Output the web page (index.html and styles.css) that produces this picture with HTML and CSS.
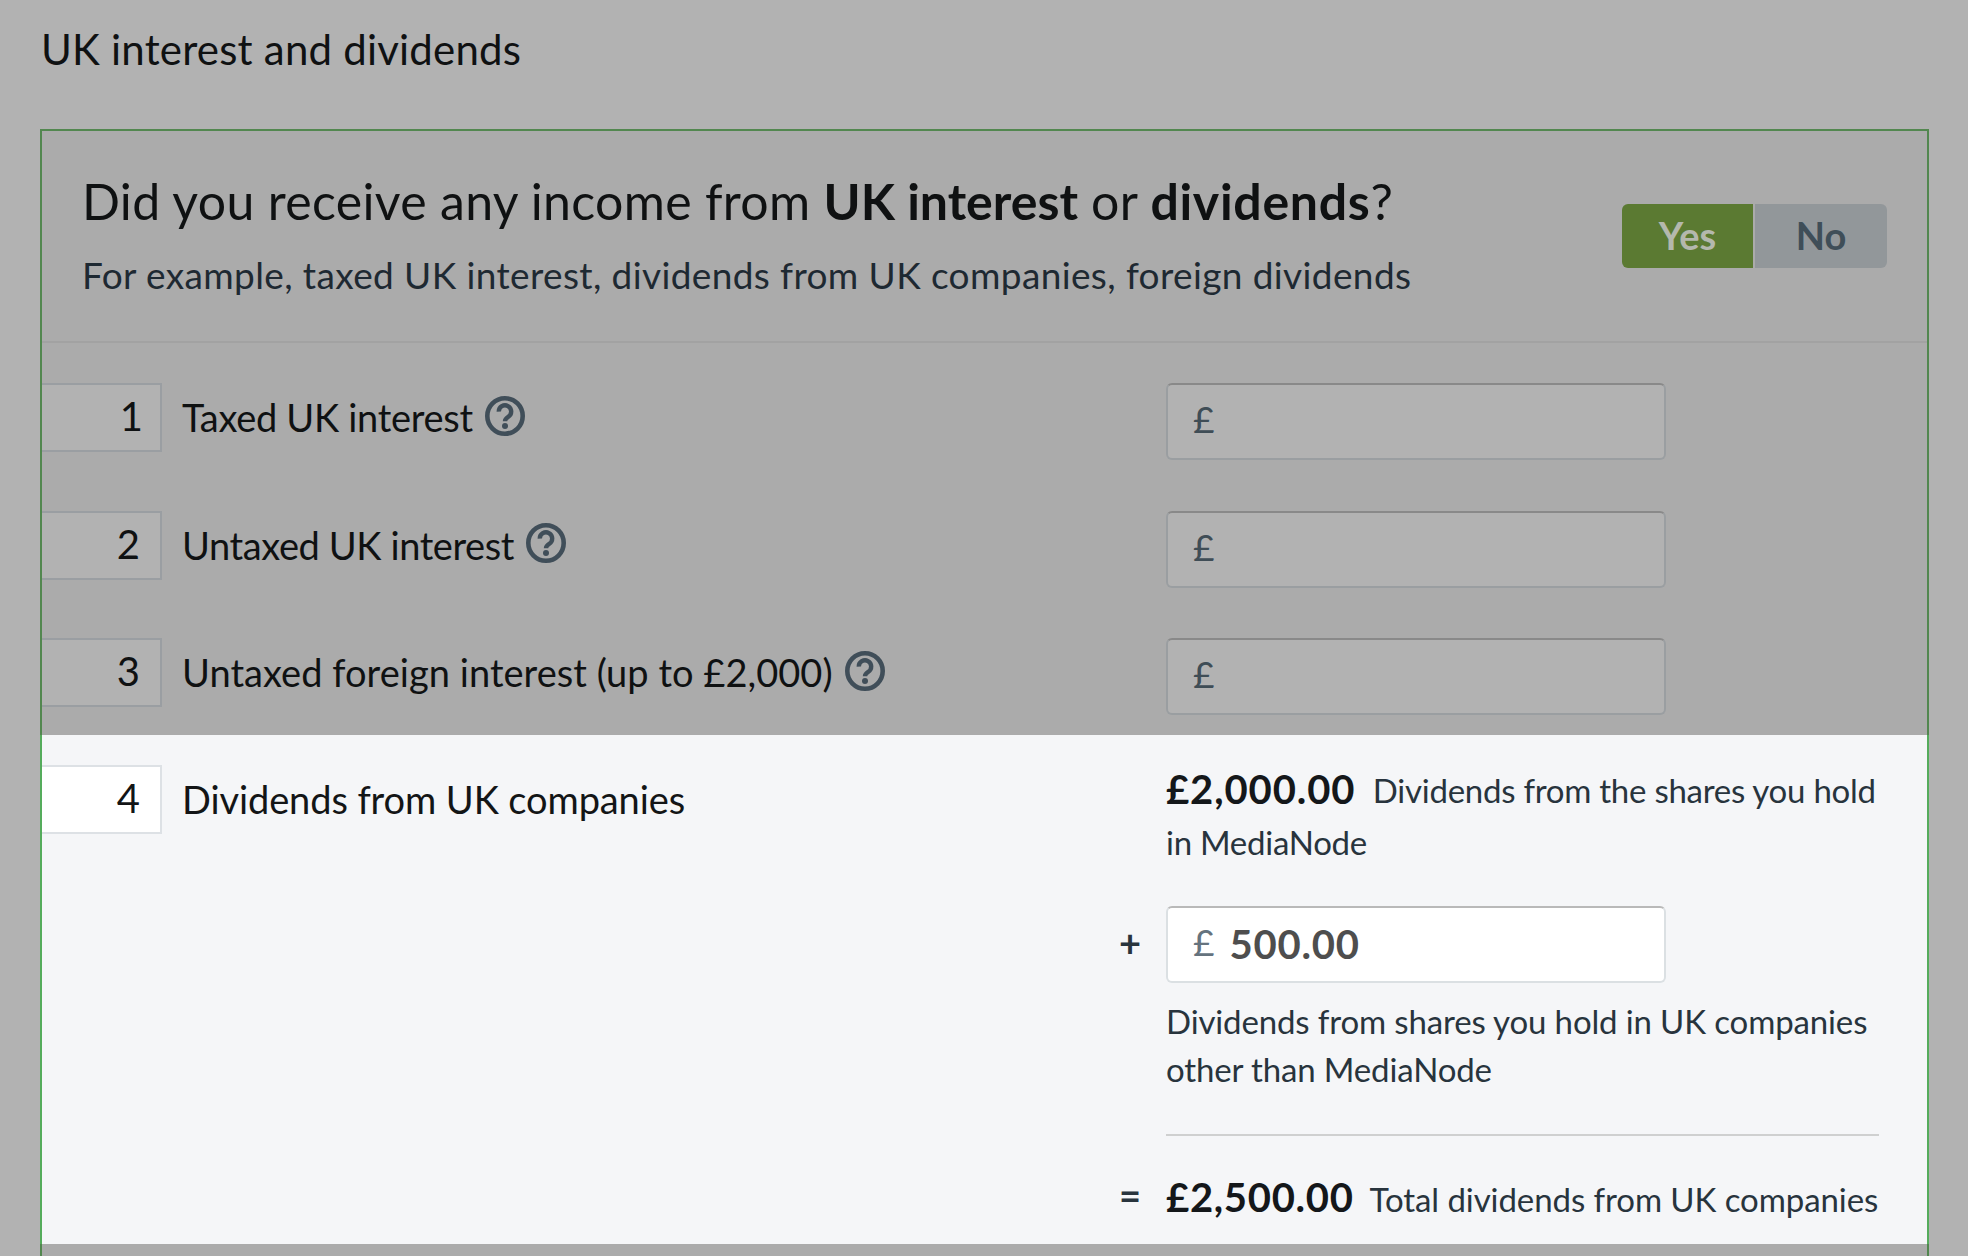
FILE: index.html
```html
<!DOCTYPE html>
<html lang="en">
<head>
<meta charset="utf-8">
<title>UK interest and dividends</title>
<link rel="stylesheet" href="styles.css">
</head>
<body>
<h1 class="page-title">UK interest and dividends</h1>
<section class="panel">
  <header class="panel-head">
    <div class="head-text">
      <h2 class="question">Did you receive any income from <b class="strong-a">UK interest</b> or <b class="strong-b">dividends</b>?</h2>
      <p class="example">For example, taxed UK interest, dividends from UK companies, foreign dividends</p>
    </div>
    <div class="toggle">
      <span class="toggle-yes">Yes</span>
      <span class="toggle-no">No</span>
    </div>
  </header>
  <div class="rows">
    <div class="row">
      <div class="num num-one">1</div>
      <div class="label label-tight">Taxed UK interest
        <svg class="help" viewBox="0 0 40 40"><circle cx="20" cy="20" r="17.7" fill="none" stroke="currentColor" stroke-width="4.6"/><path d="M13.8 15.6a6.2 6.2 0 1 1 9.4 5.2c-2.2 1.4-3.2 2.2-3.2 4.4" fill="none" stroke="currentColor" stroke-width="4.4"/><circle cx="20" cy="30" r="3" fill="currentColor"/></svg>
      </div>
      <div class="money"><span class="pound">£</span></div>
    </div>
    <div class="row">
      <div class="num">2</div>
      <div class="label label-tighter">Untaxed UK interest
        <svg class="help" viewBox="0 0 40 40"><circle cx="20" cy="20" r="17.7" fill="none" stroke="currentColor" stroke-width="4.6"/><path d="M13.8 15.6a6.2 6.2 0 1 1 9.4 5.2c-2.2 1.4-3.2 2.2-3.2 4.4" fill="none" stroke="currentColor" stroke-width="4.4"/><circle cx="20" cy="30" r="3" fill="currentColor"/></svg>
      </div>
      <div class="money"><span class="pound">£</span></div>
    </div>
    <div class="row">
      <div class="num">3</div>
      <div class="label label-wide">Untaxed foreign interest (up to £2,000)
        <svg class="help" viewBox="0 0 40 40"><circle cx="20" cy="20" r="17.7" fill="none" stroke="currentColor" stroke-width="4.6"/><path d="M13.8 15.6a6.2 6.2 0 1 1 9.4 5.2c-2.2 1.4-3.2 2.2-3.2 4.4" fill="none" stroke="currentColor" stroke-width="4.4"/><circle cx="20" cy="30" r="3" fill="currentColor"/></svg>
      </div>
      <div class="money"><span class="pound">£</span></div>
    </div>
  </div>
  <div class="active-row">
    <div class="num num-active">4</div>
    <div class="label label-active">Dividends from UK companies</div>
    <div class="calc">
      <p class="calc-line"><b class="amount">£2,000.00</b> <span class="note-inline">Dividends from the shares you hold in MediaNode</span></p>
      <div class="op-row">
        <span class="op">+</span>
        <div class="money money-active"><span class="pound">£</span><span class="money-value">500.00</span></div>
      </div>
      <p class="calc-note">Dividends from shares you hold in UK companies other than MediaNode</p>
      <hr class="calc-rule">
      <div class="total">
        <span class="op op-eq">=</span>
        <b class="amount amount-total">£2,500.00</b>
        <span class="note-total">Total dividends from UK companies</span>
      </div>
    </div>
  </div>
</section>
</body>
</html>
```
FILE: styles.css
```css
* { box-sizing: border-box; }
html, body { margin: 0; height: 100%; }
body {
  background: #b2b2b2;
  font-family: "Lato", "Open Sans", sans-serif;
  color: #0f1112;
  overflow: hidden;
  height: 1256px;
}
.page-title {
  margin: 0;
  padding: 23px 0 0 41px;
  height: 129px;
  font-size: 42px;
  line-height: 52px;
  font-weight: 400;
  letter-spacing: .2px;
}
.panel {
  margin: 0 40px;
  width: 1889px;
  height: 1140px;
  background: #ababab;
  border: solid #52874f;
  border-width: 2px 2px 0;
}
.panel-head {
  height: 212px;
  padding: 0 40px;
  border-bottom: 2px solid #a2a2a2;
  display: flex;
  justify-content: space-between;
  align-items: flex-start;
}
.question {
  margin: 0;
  padding-top: 40px;
  font-size: 50px;
  line-height: 60px;
  font-weight: 400;
  letter-spacing: .32px;
}
.strong-a { letter-spacing: 0; }
.strong-b { letter-spacing: .7px; }
.example {
  margin: 0;
  padding-top: 19px;
  font-size: 37px;
  line-height: 50px;
  letter-spacing: .38px;
  color: #1e2932;
}
.toggle {
  margin-top: 73px;
  width: 265px;
  height: 64px;
  display: flex;
  font-size: 38px;
  font-weight: 700;
}
.toggle-yes {
  width: 131px;
  padding-bottom: 2px;
  background: #5b7a32;
  color: #b4b8ad;
  border-radius: 6px 0 0 6px;
  display: flex;
  align-items: center;
  justify-content: center;
}
.toggle-no {
  flex: 1;
  margin-left: 2px;
  padding-bottom: 2px;
  background: #92979a;
  color: #3f4e58;
  border-radius: 0 6px 6px 0;
  display: flex;
  align-items: center;
  justify-content: center;
}
.rows {
  padding: 40px 0 20px;
  display: flex;
  flex-direction: column;
  gap: 50.5px;
}
.row {
  display: grid;
  grid-template-columns: 120px 1004px 500px;
  align-items: start;
}
.num {
  height: 69px;
  border: 2px solid #9a9ea2;
  border-left: 0;
  background: #b2b2b2;
  text-align: right;
  padding-right: 20px;
  font-size: 40px;
  line-height: 62px;
}
.num-one { padding-right: 17px; }
.label {
  padding-left: 20px;
  font-size: 38px;
  line-height: 68px;
  display: flex;
  align-items: center;
  gap: 12px;
}
.label-tight { letter-spacing: -.3px; }
.label-tighter { letter-spacing: -.4px; }
.label-wide { letter-spacing: .04px; }
.help {
  width: 40px;
  height: 40px;
  color: #404e59;
  margin-top: -3px;
}
.money {
  height: 77px;
  width: 500px;
  background: #b2b2b2;
  border: 2px solid #9a9ea1;
  border-top-color: #898989;
  border-radius: 6px;
  display: flex;
  align-items: center;
  padding-left: 25px;
  gap: 15px;
}
.pound {
  font-size: 37px;
  color: #3f4d56;
  margin-bottom: 6px;
}
.active-row {
  height: 509px;
  background: #f5f6f8;
  margin: 0 -2px;
  border: solid #55ac5c;
  border-width: 0 2px;
  padding-top: 30px;
  display: grid;
  grid-template-columns: 120px 1004px 1fr;
  align-items: start;
}
.num-active {
  background: #fff;
  border-color: #dde1e5;
  color: #131516;
}
.label-active { color: #131516; letter-spacing: -.1px; }
.calc { width: 713px; margin-top: -30px; padding-top: 28px; }
.calc-line {
  margin: 0;
  line-height: 52px;
  font-size: 33px;
  color: #28343d;
}
.amount {
  font-size: 40px;
  font-weight: 700;
  color: #14171a;
  letter-spacing: .9px;
  margin-right: 9px;
  vertical-align: -1px;
}
.amount-total { letter-spacing: .7px; }
.note-inline { font-size: 33px; letter-spacing: -.26px; }
.op-row {
  position: relative;
  margin-top: 37.5px;
}
.op {
  position: absolute;
  left: -47px;
  top: 50%;
  transform: translateY(-50%);
  margin-top: -2px;
  font-size: 38px;
  font-weight: 700;
  color: #28343d;
}
.money-active {
  background: #fff;
  border-color: #dbe0e3;
  border-top-color: #b9b9b9;
}
.money-active .pound { color: #65737e; }
.money-value {
  font-size: 40px;
  font-weight: 700;
  letter-spacing: .8px;
  color: #4e4e4e;
}
.calc-note {
  margin: 14px 0 0;
  font-size: 33px;
  line-height: 48px;
  letter-spacing: -.14px;
  color: #28343d;
}
.calc-rule {
  margin: 41px 0 0;
  border: 0;
  border-top: 2px solid #cfd0d0;
}
.total {
  position: relative;
  margin-top: 37.5px;
  display: flex;
  align-items: baseline;
  gap: 7px;
  font-size: 33px;
  letter-spacing: -.08px;
  color: #28343d;
  white-space: nowrap;
}
```
